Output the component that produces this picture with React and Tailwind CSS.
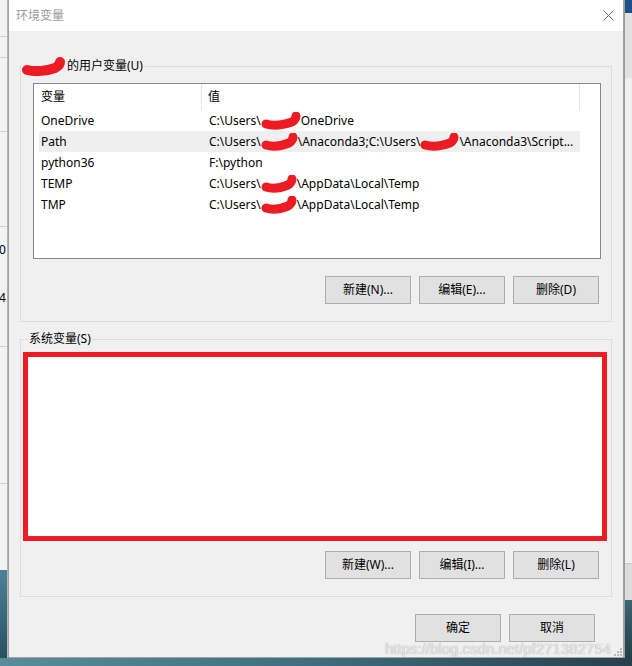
const FONT = 'font-[Noto_Sans,Noto_Sans_CJK_SC,sans-serif]'

const rows = [
  { name: 'OneDrive', parts: ['C:\\Users\\', 40, 'OneDrive'] },
  { name: 'Path', parts: ['C:\\Users\\', 37, '\\Anaconda3;C:\\Users\\', 39, '\\Anaconda3\\Script...'], selected: true },
  { name: 'python36', parts: ['F:\\python'] },
  { name: 'TEMP', parts: ['C:\\Users\\', 36, '\\AppData\\Local\\Temp'] },
  { name: 'TMP', parts: ['C:\\Users\\', 36, '\\AppData\\Local\\Temp'] },
]

const Scribble = ({ width, height = 16, d, stroke = 6, className = '' }) => (
  <svg width={width} height={height} viewBox={`0 0 ${width} ${height}`} className={`inline-block shrink-0 ${className}`}>
    <path d={d} fill="none" stroke="#ed1c24" strokeWidth={stroke} strokeLinecap="round" strokeLinejoin="round" />
  </svg>
)

// red redaction over the user name
const RowBlob = ({ width }) => (
  <Scribble
    width={width}
    height={20}
    stroke={9}
    d={`M5 13 C ${width * 0.3} 15, ${width * 0.55} 14, ${width - 9} 11 C ${width - 6} 9, ${width - 5} 7, ${width - 5} 5`}
    className="-my-[5px] align-middle"
  />
)

const WinButton = ({ children }) => (
  <button
    type="button"
    className="flex h-[28px] w-[86px] items-center justify-center border border-[#adadad] bg-[#e1e1e1] text-[12px] text-black"
  >
    {children}
  </button>
)

const ButtonRow = ({ labels }) => (
  <div className="flex justify-end gap-[8px] pr-[12px]">
    {labels.map((label) => (
      <WinButton key={label}>{label}</WinButton>
    ))}
  </div>
)

const LeftStrip = () => (
  <div className="flex w-[8px] flex-col overflow-hidden border-r border-[#b5b5b5] bg-[#f3f3f3] text-[12px] leading-[14px] text-black">
    <div className="h-[37px] border-b border-[#cfcfcf]" />
    <div className="h-[21px] border-b border-[#cfcfcf]" />
    <div className="h-[74px] border-b border-[#cfcfcf]" />
    <div className="h-[95px] border-b border-[#cfcfcf]" />
    <div className="h-[16px]" />
    <div className="h-[48px] -ml-[1px]">0</div>
    <div className="h-[17px] -ml-[1px]">4</div>
    <div className="h-[38px]" />
    <div className="h-[137px] border-t border-[#cfcfcf]" />
    <div className="h-[87px] border-t border-[#cfcfcf]" />
    <div className="flex-1 bg-gradient-to-b from-[#4d8294] via-[#3a6a7c] to-[#2b5060]" />
  </div>
)

const RightStrip = () => (
  <div className="flex w-[8px] flex-col border-l border-[#9c9c9c]">
    <div className="h-[13px] bg-[#1d4f8a]" />
    <div className="h-[65px] bg-[#e2e2e2]" />
    <div className="h-[485px] bg-[#f0f0f0]" />
    <div className="h-[37px] border-t border-[#c8c8c8] bg-[#dcdcdc]" />
    <div className="flex-1 bg-gradient-to-b from-[#3b6474] to-[#233f4c]" />
  </div>
)

const App = () => {
  return (
    <div className={`relative flex h-[666px] w-[632px] flex-col overflow-hidden bg-[#2f5666] ${FONT}`}>
      <div className="flex h-[658px]">
        <LeftStrip />

        <div className="flex w-[616px] flex-col border-x border-b border-[#a3a3a3] bg-[#f0f0f0] text-[12px] text-black">
          <div className="flex h-[31px] items-center justify-between bg-white pl-[7px] pr-[9px]">
            <span className="text-[12px] text-[#9a9a9a]">环境变量</span>
            <svg width="11" height="11" viewBox="0 0 11 11">
              <path d="M0.5 0.5 L10.5 10.5 M10.5 0.5 L0.5 10.5" stroke="#6b6b6b" strokeWidth="1" fill="none" />
            </svg>
          </div>

          <fieldset className="mx-[11px] mt-[27px] border border-[#dcdcdc] pb-[17px]">
            <legend className="flex h-[16px] items-center leading-[16px]">
              <Scribble
                width={45}
                height={20}
                stroke={10}
                d="M6 14 C 14 16, 26 15, 34 12 C 38 10, 39 7, 39 6"
                className="-my-[2px]"
              />
              <span className="pl-[1px] pr-[2px]">的用户变量(U)</span>
            </legend>

            <div className="ml-[12px] mt-[9px] h-[176px] w-[568px] overflow-hidden border border-[#828790] bg-white">
              <div className="flex h-[26px] items-center">
                <div className="flex h-full w-[168px] items-center border-r border-[#e5e5e5] pl-[7px]">变量</div>
                <div className="flex h-full w-[378px] items-center border-r border-[#e5e5e5] pl-[6px]">值</div>
              </div>
              {rows.map((row) => (
                <div
                  key={row.name}
                  className={`ml-[5px] flex h-[21px] w-[541px] items-center whitespace-nowrap ${row.selected ? 'bg-[#efefef]' : ''}`}
                >
                  <div className="w-[163px] pl-[2px]">{row.name}</div>
                  <div className="flex flex-1 items-center overflow-hidden pl-[7px]">
                    {row.parts.map((part, index) =>
                      typeof part === 'number' ? <RowBlob key={index} width={part} /> : <span key={index}>{part}</span>
                    )}
                  </div>
                </div>
              ))}
            </div>

            <div className="mt-[17px]">
              <ButtonRow labels={['新建(N)...', '编辑(E)...', '删除(D)']} />
            </div>
          </fieldset>

          <fieldset className="mx-[11px] mt-[9px] border border-[#dcdcdc] pb-[17px]">
            <legend className="ml-[7px] h-[16px] px-[1px] leading-[16px]">系统变量(S)</legend>

            <div className="ml-[2px] mt-[5px] h-[189px] w-[584px] border-[5px] border-[#ed1c24] bg-white" />

            <div className="mt-[10px]">
              <ButtonRow labels={['新建(W)...', '编辑(I)...', '删除(L)']} />
            </div>
          </fieldset>

          <div className="mt-[17px] flex justify-end gap-[8px] pr-[28px]">
            <WinButton>确定</WinButton>
            <WinButton>取消</WinButton>
          </div>

          <div className="flex flex-1 items-end justify-end pb-[1px] pr-[1px]">
            <svg width="8" height="8" viewBox="0 0 8 8">
              {[[6, 0], [3, 3], [6, 3], [0, 6], [3, 6], [6, 6]].map(([x, y]) => (
                <rect key={`${x}-${y}`} x={x} y={y} width="2" height="2" fill="#b8b8b8" />
              ))}
            </svg>
          </div>
        </div>

        <RightStrip />
      </div>

      <div className="flex-1 bg-gradient-to-r from-[#5b8c99] via-[#3f6d7d] to-[#27404c]" />

      <div className="absolute left-[385px] top-[638px] font-[Liberation_Sans,Arial,sans-serif] text-[15px] text-white/75 [text-shadow:0_0_1px_#8a8a8a]">
        https://blog.csdn.net/pf271382754
      </div>
    </div>
  )
}

export default App
